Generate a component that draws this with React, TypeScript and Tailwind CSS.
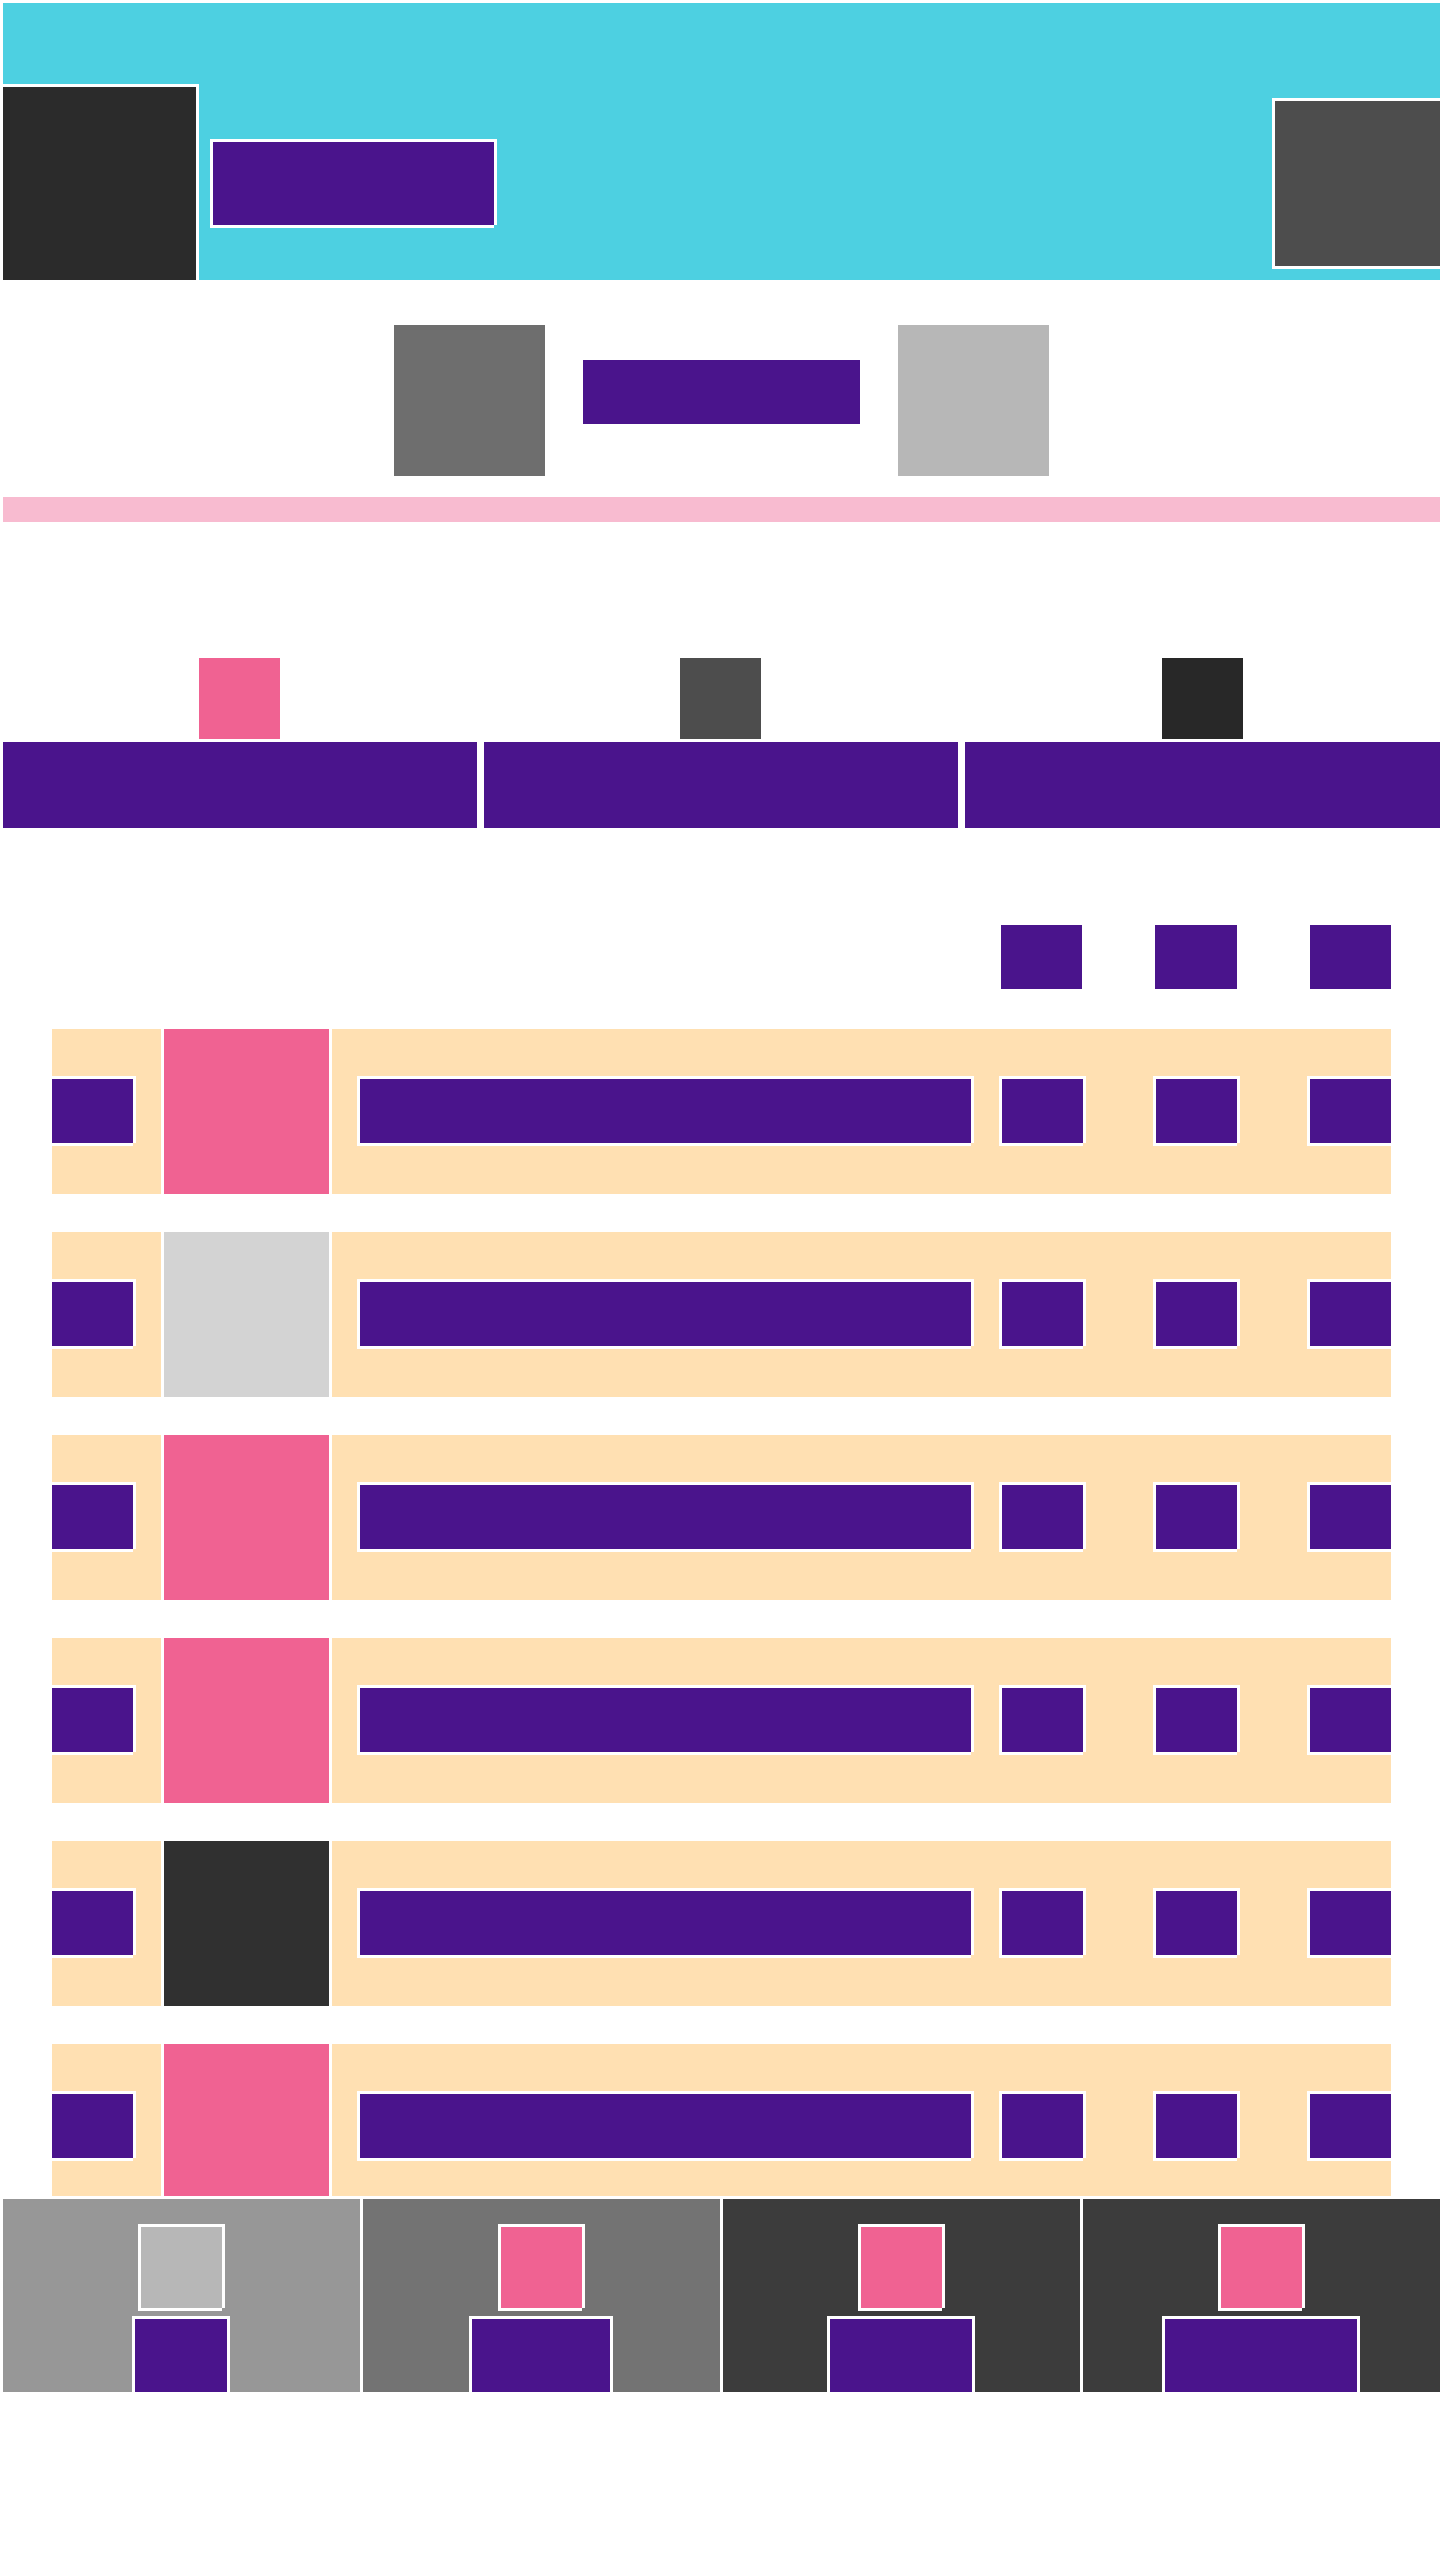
const notch = "shadow-[-3px_-3px_0_#fff,3px_-3px_0_#fff,3px_0_0_#fff,-3px_3px_0_#fff,0_3px_0_#fff]";

const rows = ["bg-[#f06292]", "bg-[#d3d3d3]", "bg-[#f06292]", "bg-[#f06292]", "bg-[#303030]", "bg-[#f06292]"];

const footerCells = [
    { bg: "bg-[#979797]", thumb: "bg-[#b7b7b7]", width: "w-[92px]" },
    { bg: "bg-[#737373]", thumb: "bg-[#f06292]", width: "w-[138px]" },
    { bg: "bg-[#3c3c3c]", thumb: "bg-[#f06292]", width: "w-[142px]" },
    { bg: "bg-[#3c3c3c]", thumb: "bg-[#f06292]", width: "w-[192px]" },
];

export default function App() {
    return (
        <div className="min-h-screen bg-white pl-[3px] pt-[3px]">
            {/* HEADER */}
            <header className="h-[277px] bg-[#4dd0e1] pt-[84px] flex items-center justify-between">
                <div className="flex items-center">
                    <div className={`w-[193px] h-[193px] bg-[#2b2b2b] ${notch}`} />
                    <div className={`ml-[17px] w-[281px] h-[83px] bg-[#4a148c] ${notch}`} />
                </div>
                <div className={`w-[165px] h-[165px] bg-[#4d4d4d] ${notch}`} />
            </header>

            {/* HERO */}
            <section className="mt-[45px] flex justify-center gap-[38px]">
                <div className="w-[151px] h-[151px] bg-[#6e6e6e]" />
                <div className="mt-[35px] w-[277px] h-[64px] bg-[#4a148c]" />
                <div className="w-[151px] h-[151px] bg-[#b7b7b7]" />
            </section>

            {/* STRIP */}
            <div className="mt-[21px] h-[25px] bg-[#f8bbd0]" />

            {/* FEATURES */}
            <section className="mt-[136px] grid grid-cols-[474px_474px_475px] gap-[7px]">
                <div className="flex flex-col items-center gap-[3px]">
                    <div className="w-[81px] h-[81px] mr-px bg-[#f06292]" />
                    <div className="w-full h-[86px] bg-[#4a148c]" />
                </div>
                <div className="flex flex-col items-center gap-[3px]">
                    <div className="w-[81px] h-[81px] mr-px bg-[#4d4d4d]" />
                    <div className="w-full h-[86px] bg-[#4a148c]" />
                </div>
                <div className="flex flex-col items-center gap-[3px]">
                    <div className="w-[81px] h-[81px] mr-px bg-[#282828]" />
                    <div className="w-full h-[86px] bg-[#4a148c]" />
                </div>
            </section>

            {/* TABLE */}
            <section className="ml-[49px] w-[1339px]">
                <div className="mt-[97px] flex justify-end gap-[73px]">
                    <div className="w-[81px] h-[64px] bg-[#4a148c]" />
                    <div className="w-[82px] h-[64px] bg-[#4a148c]" />
                    <div className="w-[81px] h-[64px] bg-[#4a148c]" />
                </div>

                <div className="mt-[40px] h-[1167px] overflow-hidden flex flex-col gap-[38px]">
                    {rows.map((thumb, index) => (
                        <div key={index} className="h-[165px] shrink-0 bg-[#ffe0b2] overflow-hidden flex items-center">
                            <div className={`w-[81px] h-[64px] mb-px bg-[#4a148c] ${notch}`} />
                            <div className={`ml-[31px] w-[165px] h-[165px] ${thumb} ${notch}`} />
                            <div className={`ml-[31px] w-[611px] h-[64px] mb-px bg-[#4a148c] ${notch}`} />
                            <div className={`ml-[31px] w-[81px] h-[64px] mb-px bg-[#4a148c] ${notch}`} />
                            <div className={`ml-[73px] w-[81px] h-[64px] mb-px bg-[#4a148c] ${notch}`} />
                            <div className={`ml-[73px] w-[81px] h-[64px] mb-px bg-[#4a148c] ${notch}`} />
                        </div>
                    ))}
                </div>
            </section>

            {/* FOOTER */}
            <footer className="mt-[3px] grid grid-cols-4 gap-[3px]">
                {footerCells.map((cell, index) => (
                    <div key={index} className={`h-[193px] ${cell.bg} overflow-hidden pt-[28px] flex flex-col items-center gap-[11px]`}>
                        <div className={`w-[81px] h-[81px] shrink-0 ${cell.thumb} ${notch}`} />
                        <div className={`${cell.width} h-[80px] shrink-0 mr-px bg-[#4a148c] ${notch}`} />
                    </div>
                ))}
            </footer>
        </div>
    );
}
